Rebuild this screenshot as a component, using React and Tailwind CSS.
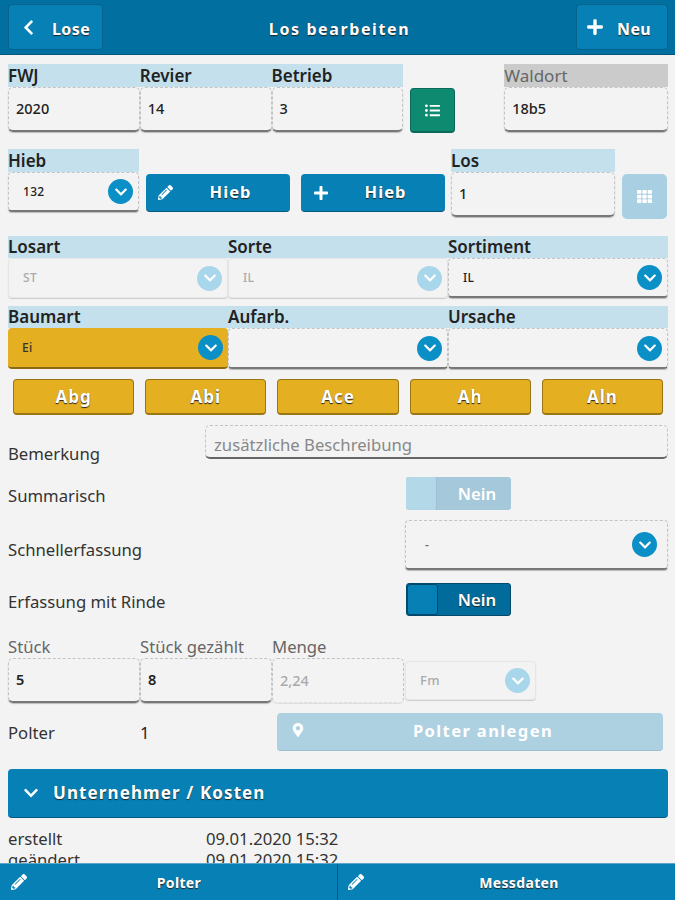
import { FaChevronLeft, FaChevronDown, FaPlus, FaPencilAlt, FaListUl, FaTh, FaMapMarkerAlt } from 'react-icons/fa';

const shadow = '[text-shadow:0_1px_1px_#222]';

function Label({ children, muted, plain, short }) {
  if (plain) return <div className="h-[22px] text-[16.7px] leading-[22px] text-[#666] whitespace-nowrap">{children}</div>;
  return (
    <div className={`text-[17px] font-semibold whitespace-nowrap ${short ? 'h-[22px] leading-[22px]' : 'h-[23px] leading-[23px]'} ${muted ? 'bg-[#cbcbcb] text-[#666] !font-normal' : 'bg-[#c3e0ec] text-[#222]'}`}>
      {children}
    </div>
  );
}

function Field({ value, className = 'h-[45px]', disabled }) {
  return (
    <div className={`flex items-center pl-[7px] rounded-[5px] border border-dashed border-[#c4c4c4] text-[14.5px] font-medium ${disabled ? 'text-[#aaa] border-b border-b-[#ddd] shadow-[0_1px_1px_#ddd]' : 'text-[#222] border-b-2 border-b-[#777] [border-bottom-style:solid] shadow-[0_1px_1px_#bbb]'} ${className}`}>
      {value}
    </div>
  );
}

function Chevron({ light }) {
  return (
    <span className={`flex items-center justify-center w-[25px] h-[25px] rounded-full text-white shrink-0 ${light ? 'bg-[#a8d6ea]' : 'bg-[#0a8fc6]'}`}>
      <FaChevronDown size={14} />
    </span>
  );
}

function Select({ value, disabled, amber, className = '' }) {
  return (
    <div className={`flex items-center justify-between pr-[5px] pl-[14px] rounded-[4px] text-[12px] tracking-wide font-medium ${
      amber ? 'bg-[#e5af22] text-[#333] border-b-2 border-b-[#8a6a10]' :
      disabled ? 'text-[#aaa] border border-[#e6e6e6] shadow-[0_1px_1px_#ccc]' :
      'text-[#222] border border-dashed border-[#c4c4c4] border-b-2 border-b-[#777] [border-bottom-style:solid] shadow-[0_1px_1px_#bbb]'
    } ${className}`}>
      <span>{value}</span>
      <Chevron light={disabled} />
    </div>
  );
}

function BlueButton({ icon, label, className = '' }) {
  return (
    <div className={`relative flex items-center justify-center h-[38px] bg-[#0680b5] rounded-[4px] border-b border-[#04597f] text-white text-[16.5px] font-bold tracking-[1px] ${shadow} ${className}`}>
      <span className="absolute left-[12px] flex">{icon}</span>
      <span className="pl-[25px]">{label}</span>
    </div>
  );
}

function AmberButton({ label }) {
  return (
    <div className={`flex-1 flex items-center justify-center h-[36px] bg-[#e5af22] rounded-[4px] border border-[#9a7613] border-b-2 text-white text-[17px] font-bold tracking-[1px] ${shadow}`}>
      {label}
    </div>
  );
}

function Toggle({ disabled }) {
  return (
    <div className={`flex w-[105px] h-[33px] rounded-[3px] overflow-hidden ${disabled ? 'bg-[#a5c8da]' : 'bg-[#016c9b] border border-[#04496b]'}`}>
      <div className={`w-[31px] rounded-[3px] ${disabled ? 'bg-[#b3d8e8] border-r border-[#9cc0d2]' : 'bg-[#0680b5] border border-[#04496b]'}`} />
      <div className={`flex-1 flex items-center justify-center pl-[6px] text-white text-[16.7px] font-semibold ${disabled ? '' : shadow}`}>Nein</div>
    </div>
  );
}

export default function App() {
  return (
    <div className="flex flex-col w-[675px] h-[900px] overflow-hidden bg-[#f3f3f3] font-['Noto_Sans','Open_Sans',sans-serif]">
      <header className="flex items-center justify-between shrink-0 h-[55px] px-2 pr-[7px] bg-[#016f9f] border-b border-[#04567a] text-white">
        <div className={`flex items-center w-[95px] h-[46px] pl-[11px] gap-[15px] bg-[#0680b5] rounded-[4px] border border-[#05638c] text-[16px] font-bold tracking-wide ${shadow}`}>
          <FaChevronLeft size={17} />
          <span className="pt-[3px]">Lose</span>
        </div>
        <div className={`pt-[4px] text-[16px] font-bold tracking-[1.6px] ${shadow}`}>Los bearbeiten</div>
        <div className={`flex items-center w-[92px] h-[46px] pl-[9px] gap-[13px] bg-[#0680b5] rounded-[4px] border border-[#05638c] text-[16px] font-bold tracking-wide ${shadow}`}>
          <FaPlus size={18} />
          <span className="pt-[3px]">Neu</span>
        </div>
      </header>

      <main className="flex-1 min-h-0 overflow-hidden px-2 pr-[7px] pt-[9px]">
        <div className="flex items-start">
          <div className="w-[132px]"><Label>FWJ</Label><Field value="2020" /></div>
          <div className="w-[132px]"><Label>Revier</Label><Field value="14" /></div>
          <div className="w-[132px]"><Label>Betrieb</Label><Field value="3" /></div>
          <div className="flex items-center justify-center w-[45px] h-[45px] mt-[24px] ml-[7px] bg-[#0d8a70] rounded-[4px] border border-[#0a6a57] border-b-2 text-white">
            <FaListUl size={15} />
          </div>
          <div className="w-[164px] ml-[49px]"><Label muted>Waldort</Label><Field value="18b5" /></div>
        </div>

        <div className="flex items-start mt-[16px]">
          <div className="w-[131px]"><Label>Hieb</Label><Select value="132" className="h-[40px]" /></div>
          <BlueButton icon={<FaPencilAlt size={15} />} label="Hieb" className="w-[144px] mt-[25px] ml-[7px]" />
          <BlueButton icon={<FaPlus size={16} />} label="Hieb" className="w-[144px] mt-[25px] ml-[11px]" />
          <div className="w-[164px] ml-[6px]"><Label>Los</Label><Field value="1" /></div>
          <div className="flex items-center justify-center w-[45px] h-[45px] mt-[25px] ml-[7px] bg-[#a9cfe2] rounded-[5px] text-white">
            <FaTh size={15} />
          </div>
        </div>

        <div className="mt-[17px]">
          <div className="grid grid-cols-3">
            <Label short>Losart</Label><Label short>Sorte</Label><Label short>Sortiment</Label>
            <Select value="ST" disabled className="h-[40px]" />
            <Select value="IL" disabled className="h-[40px]" />
            <Select value="IL" className="h-[40px]" />
          </div>
        </div>

        <div className="mt-[8px]">
          <div className="grid grid-cols-3">
            <Label short>Baumart</Label><Label short>Aufarb.</Label><Label short>Ursache</Label>
            <Select value="Ei" amber className="h-[41px]" />
            <Select className="h-[41px]" />
            <Select className="h-[41px]" />
          </div>
        </div>

        <div className="flex gap-[11px] mt-[10px] mx-[5px]">
          <AmberButton label="Abg" />
          <AmberButton label="Abi" />
          <AmberButton label="Ace" />
          <AmberButton label="Ah" />
          <AmberButton label="Aln" />
        </div>

        <div className="flex items-end mt-[10px] text-[16.7px] text-[#333]">
          <span className="w-[197px] leading-[20px] mb-[-5px]">Bemerkung</span>
          <div className="flex-1 h-[34px] flex items-center pl-2 pt-[6px] rounded-[5px] border border-dashed border-[#c4c4c4] border-b-2 border-b-[#666] [border-bottom-style:solid] text-[16.7px] text-[#888]">
            zusätzliche Beschreibung
          </div>
        </div>

        <div className="flex items-center mt-[18px] text-[16.7px] text-[#333]">
          <span className="w-[398px] pt-[5px]">Summarisch</span>
          <Toggle disabled />
        </div>

        <div className="flex items-center mt-[10px] text-[16.7px] text-[#333]">
          <span className="w-[397px] pt-[10px]">Schnellerfassung</span>
          <Select value="-" className="flex-1 h-[50px] !pl-[19px] !pr-[10px] !text-[#666]" />
        </div>

        <div className="flex items-center mt-[13px] text-[16.7px] text-[#333]">
          <span className="w-[398px] pt-[5px]">Erfassung mit Rinde</span>
          <Toggle />
        </div>

        <div className="flex items-start mt-[20px]">
          <div className="w-[132px]"><Label plain>Stück</Label><Field value="5" className="h-[45px] !font-semibold" /></div>
          <div className="w-[132px]"><Label plain>Stück gezählt</Label><Field value="8" className="h-[45px] !font-semibold" /></div>
          <div className="w-[132px]"><Label plain>Menge</Label><Field value="2,24" disabled className="h-[45px]" /></div>
          <Select value="Fm" disabled className="w-[131px] h-[39px] mt-[25px] ml-[1px] !text-[13px] !pl-[14px]" />
        </div>

        <div className="flex items-center mt-[10px] text-[16.7px] text-[#333]">
          <span className="w-[132px] pt-[2px]">Polter</span>
          <span className="w-[137px] pt-[2px] text-[#222]">1</span>
          <div className="relative flex items-center justify-center w-[386px] h-[38px] bg-[#aed1e2] rounded-[4px] border-b border-[#9dbfd0] text-white text-[16.5px] font-bold tracking-[1.4px]">
            <FaMapMarkerAlt size={14} className="absolute left-[14px] top-[10px]" />
            <span className="pl-[26px]">Polter anlegen</span>
          </div>
        </div>

        <div className={`flex items-center gap-[14px] h-[49px] mt-[18px] pl-[15px] bg-[#0680b5] rounded-[4px] border-b border-[#04597f] text-white text-[17px] font-bold tracking-[1.1px] ${shadow}`}>
          <FaChevronDown size={16} />
          <span>Unternehmer / Kosten</span>
        </div>

        <div className="flex items-center mt-[10px] text-[16.7px] leading-[21px] text-[#333]">
          <span className="w-[198px]">erstellt</span>
          <span>09.01.2020 15:32</span>
        </div>
        <div className="flex items-center text-[16.7px] leading-[21px] text-[#333]">
          <span className="w-[198px]">geändert</span>
          <span>09.01.2020 15:32</span>
        </div>
      </main>

      <footer className="flex shrink-0 h-[37px] bg-[#0680b5] border-t border-[#5aa7c9] text-white text-[14px] font-bold tracking-wide">
        <div className={`relative flex-1 flex items-center justify-center border-r border-[#04597f] ${shadow}`}>
          <FaPencilAlt size={16} className="absolute left-[11px]" />
          <span className="pl-[21px]">Polter</span>
        </div>
        <div className={`relative flex-1 flex items-center justify-center ${shadow}`}>
          <FaPencilAlt size={16} className="absolute left-[10px]" />
          <span className="pl-[25px]">Messdaten</span>
        </div>
      </footer>
    </div>
  );
}
